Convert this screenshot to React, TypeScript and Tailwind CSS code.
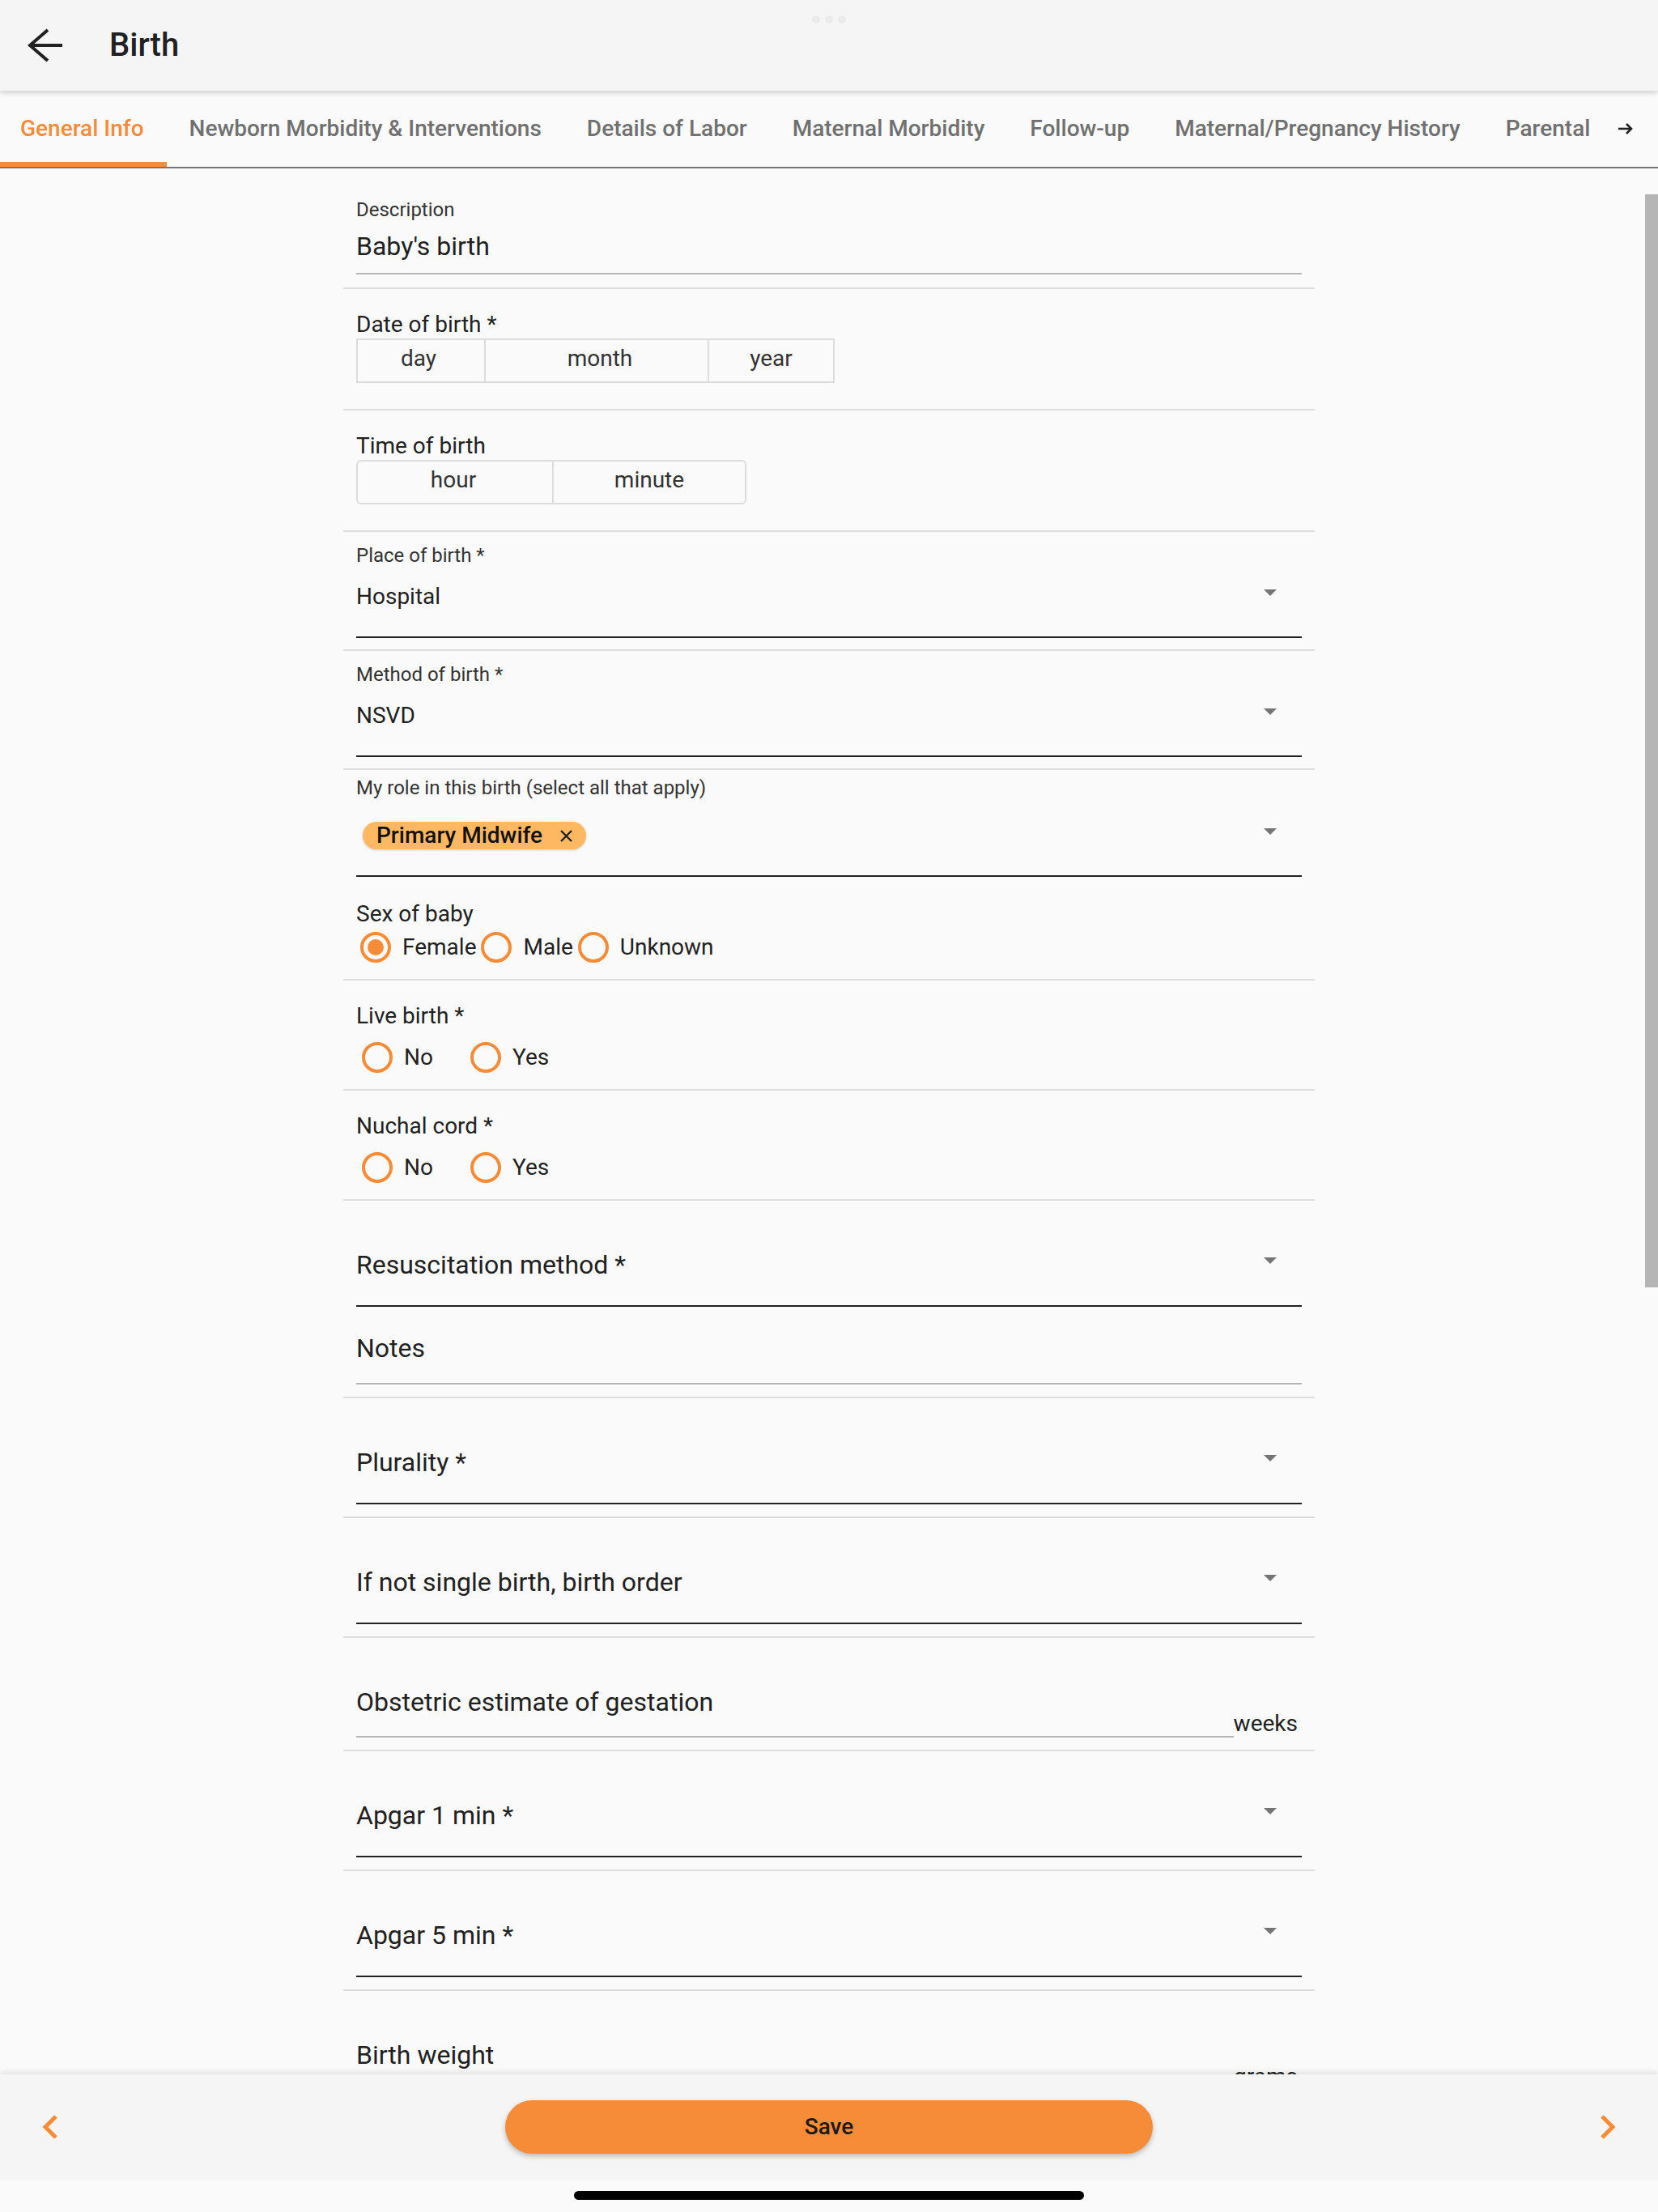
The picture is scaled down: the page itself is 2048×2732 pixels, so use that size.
import React from 'react';

const TABS = [
  'General Info',
  'Newborn Morbidity & Interventions',
  'Details of Labor',
  'Maternal Morbidity',
  'Follow-up',
  'Maternal/Pregnancy History',
  'Parental',
];

function Caret({ className = 'mt-[7px]' }: { className?: string }) {
  return (
    <svg width="16" height="8" viewBox="0 0 16 8" className={`shrink-0 mr-[31px] ${className}`}>
      <path d="M0 0h16L8 8z" fill="#757575" />
    </svg>
  );
}

function Radio({ checked = false }: { checked?: boolean }) {
  return (
    <span className="w-[38px] h-[38px] shrink-0 rounded-full border-4 border-[#f68b38] flex items-center justify-center">
      {checked && <span className="w-[20px] h-[20px] rounded-full bg-[#f68b38]" />}
    </span>
  );
}

function YesNo({ label }: { label: string }) {
  return (
    <div className="px-4 pt-[30px] pb-[20px] border-b-2 border-[#dddddd]">
      <div className="text-[28px] leading-none text-[#212121]">{label}</div>
      <div className="mt-[18px] flex">
        {['No', 'Yes'].map((opt) => (
          <label key={opt} className="w-[134px] pl-[7px] flex items-center">
            <Radio />
            <span className="ml-[14px] text-[28px] leading-none text-[#212121]">{opt}</span>
          </label>
        ))}
      </div>
    </div>
  );
}

function FilledSelect({ label, value }: { label: string; value: string }) {
  return (
    <div className="px-4 pt-[17px] pb-[14px] border-b-2 border-[#dddddd]">
      <div className="text-[24px] leading-none text-[#333333]">{label}</div>
      <div className="mt-[25px] flex items-start justify-between">
        <span className="text-[28px] leading-none text-[#212121]">{value}</span>
        <Caret className="mt-[5px]" />
      </div>
      <div className="mt-[35px] h-[2px] bg-[#212121]" />
    </div>
  );
}

function EmptySelect({ label }: { label: string }) {
  return (
    <div className="px-4 pt-[63px] pb-[15px] border-b-2 border-[#dddddd]">
      <div className="flex items-start justify-between">
        <span className="text-[32px] leading-none text-[#212121]">{label}</span>
        <Caret />
      </div>
      <div className="mt-[34px] h-[2px] bg-[#212121]" />
    </div>
  );
}

function UnitField({ label, unit }: { label: string; unit: string }) {
  return (
    <div className="px-4 pt-[63px] pb-[15px] border-b-2 border-[#dddddd]">
      <div className="flex items-end">
        <div className="flex-1">
          <div className="text-[32px] leading-none text-[#212121]">{label}</div>
          <div className="mt-[26px] h-[2px] bg-[#b5b5b5]" />
        </div>
        <span className="pb-[3px] pr-[5px] text-[28px] leading-none text-[#212121]">{unit}</span>
      </div>
    </div>
  );
}

export default function App() {
  return (
    <div className="h-[2732px] w-full flex flex-col overflow-hidden bg-[#fafafa] font-['Roboto',sans-serif]">
      {/* App bar */}
      <header className="relative z-20 h-[112px] shrink-0 flex items-center bg-[#f5f5f5] shadow-[0_3px_6px_rgba(0,0,0,0.16)]">
        <svg width="44" height="42" viewBox="0 0 44 42" className="ml-[34px]" fill="none" stroke="#212121" strokeWidth="4">
          <path d="M43 21H4" />
          <path d="M25 2L3 21l22 19" />
        </svg>
        <span className="ml-[57px] text-[40px] font-medium leading-none text-[#212121]">Birth</span>
        <div className="absolute top-[19px] left-[1003px] flex gap-[6px]">
          <span className="w-[10px] h-[10px] rounded-full bg-[#ebebeb]" />
          <span className="w-[10px] h-[10px] rounded-full bg-[#ebebeb]" />
          <span className="w-[10px] h-[10px] rounded-full bg-[#ebebeb]" />
        </div>
      </header>

      {/* Tabs */}
      <nav className="relative z-10 h-[96px] shrink-0 flex bg-[#fafafa] border-b-2 border-[#757575]">
        <div className="flex flex-1 overflow-hidden ml-[-3px]">
          {TABS.map((tab, i) => (
            <div
              key={tab}
              className={`shrink-0 flex items-center px-[28px] border-y-[6px] border-t-transparent text-[28px] font-medium leading-none whitespace-nowrap ${
                i === 0 ? 'border-b-[#f68b38] text-[#f68b38]' : 'border-b-transparent text-[#707070]'
              }`}
            >
              {tab}
            </div>
          ))}
        </div>
        <div className="w-[80px] shrink-0 flex items-center justify-center">
          <svg width="18" height="14" viewBox="0 0 18 14" fill="none" stroke="#222222" strokeWidth="2.6">
            <path d="M0 7h16" />
            <path d="M10 1l6 6-6 6" />
          </svg>
        </div>
      </nav>

      {/* Form */}
      <main className="relative flex-1 overflow-hidden">
        <div className="mx-auto w-[1200px]">
          <div className="px-4 pt-[39px] pb-[16px] border-b-2 border-[#dddddd]">
            <div className="text-[24px] leading-none text-[#333333]">Description</div>
            <div className="mt-[17px] text-[32px] leading-none text-[#212121]">Baby's birth</div>
            <div className="mt-[17px] h-[2px] bg-[#b5b5b5]" />
          </div>

          <div className="px-4 pt-[30px] pb-[32px] border-b-2 border-[#dddddd]">
            <div className="text-[28px] leading-none text-[#212121]">Date of birth *</div>
            <div className="mt-[3px] flex w-[591px] h-[55px] border-2 border-[#dcdcdc] text-[28px] leading-none text-[#333333]">
              <div className="w-[156px] flex items-center justify-center pb-[6px] pr-[6px]">day</div>
              <div className="w-[278px] flex items-center justify-center pb-[6px] pl-[8px] border-x-2 border-[#dcdcdc]">month</div>
              <div className="flex-1 flex items-center justify-center pb-[6px]">year</div>
            </div>
          </div>

          <div className="px-4 pt-[30px] pb-[32px] border-b-2 border-[#dddddd]">
            <div className="text-[28px] leading-none text-[#212121]">Time of birth</div>
            <div className="mt-[3px] flex w-[482px] h-[55px] rounded-[6px] border-2 border-[#dcdcdc] text-[28px] leading-none text-[#333333]">
              <div className="w-[240px] flex items-center justify-center pb-[6px] pr-[4px]">hour</div>
              <div className="flex-1 flex items-center justify-center pb-[6px] border-l-2 border-[#dcdcdc]">minute</div>
            </div>
          </div>

          <FilledSelect label="Place of birth *" value="Hospital" />
          <FilledSelect label="Method of birth *" value="NSVD" />

          <div className="px-4 pt-[10px] pb-[20px] border-b-2 border-[#dddddd]">
            <div className="text-[24px] leading-none text-[#333333]">My role in this birth (select all that apply)</div>
            <div className="mt-[30px] flex items-start justify-between">
              <span className="ml-[8px] h-[34px] flex items-center pl-[17px] pr-[17px] rounded-full bg-[#ffb862] shadow-[0_1px_3px_rgba(0,0,0,0.18)]">
                <span className="text-[28px] font-medium leading-none text-[#111111]">Primary Midwife</span>
                <svg width="15" height="15" viewBox="0 0 15 15" className="ml-[22px]" stroke="#222222" strokeWidth="2.4">
                  <path d="M1 1l13 13M14 1L1 14" />
                </svg>
              </span>
              <Caret className="mt-[8px]" />
            </div>
            <div className="mt-[32px] h-[2px] bg-[#212121]" />

            <div className="mt-[32px] text-[28px] leading-none text-[#212121]">Sex of baby</div>
            <div className="mt-[8px] flex">
              {['Female', 'Male', 'Unknown'].map((opt, i) => (
                <label key={opt} className="flex items-center pl-[5px] pr-[1px]">
                  <Radio checked={i === 0} />
                  <span className="ml-[14px] text-[28px] leading-none text-[#212121]">{opt}</span>
                </label>
              ))}
            </div>
          </div>

          <YesNo label="Live birth *" />
          <YesNo label="Nuchal cord *" />

          <div className="px-4 pt-[63px] pb-[15px] border-b-2 border-[#dddddd]">
            <div className="flex items-start justify-between">
              <span className="text-[32px] leading-none text-[#212121]">Resuscitation method *</span>
              <Caret />
            </div>
            <div className="mt-[34px] h-[2px] bg-[#212121]" />
            <div className="mt-[35px] text-[32px] leading-none text-[#212121]">Notes</div>
            <div className="mt-[27px] h-[2px] bg-[#b5b5b5]" />
          </div>

          <EmptySelect label="Plurality *" />
          <EmptySelect label="If not single birth, birth order" />
          <UnitField label="Obstetric estimate of gestation" unit="weeks" />
          <EmptySelect label="Apgar 1 min *" />
          <EmptySelect label="Apgar 5 min *" />
          <UnitField label="Birth weight" unit="grams" />
        </div>

        {/* scroll thumb */}
        <div className="absolute right-0 top-[32px] w-[16px] h-[1350px] bg-[#b5b5b5]" />
      </main>

      {/* Bottom actions */}
      <footer className="relative z-20 h-[130px] shrink-0 flex items-center justify-between px-[52px] bg-[#f5f5f5] shadow-[0_-3px_6px_rgba(0,0,0,0.1)]">
        <svg width="19" height="30" viewBox="0 0 19 30" fill="none" stroke="#f68b38" strokeWidth="5">
          <path d="M17 2L4 15l13 13" />
        </svg>
        <button className="w-[800px] h-[66px] rounded-full bg-[#f68b38] text-[28px] font-medium leading-none text-[#1a1a1a] shadow-[0_3px_6px_rgba(0,0,0,0.25)]">
          Save
        </button>
        <svg width="19" height="30" viewBox="0 0 19 30" fill="none" stroke="#f68b38" strokeWidth="5">
          <path d="M2 2l13 13L2 28" />
        </svg>
      </footer>
      <div className="h-[40px] shrink-0 flex justify-center pt-[14px] bg-[#fafafa]">
        <div className="w-[630px] h-[11px] rounded-full bg-black" />
      </div>
    </div>
  );
}
